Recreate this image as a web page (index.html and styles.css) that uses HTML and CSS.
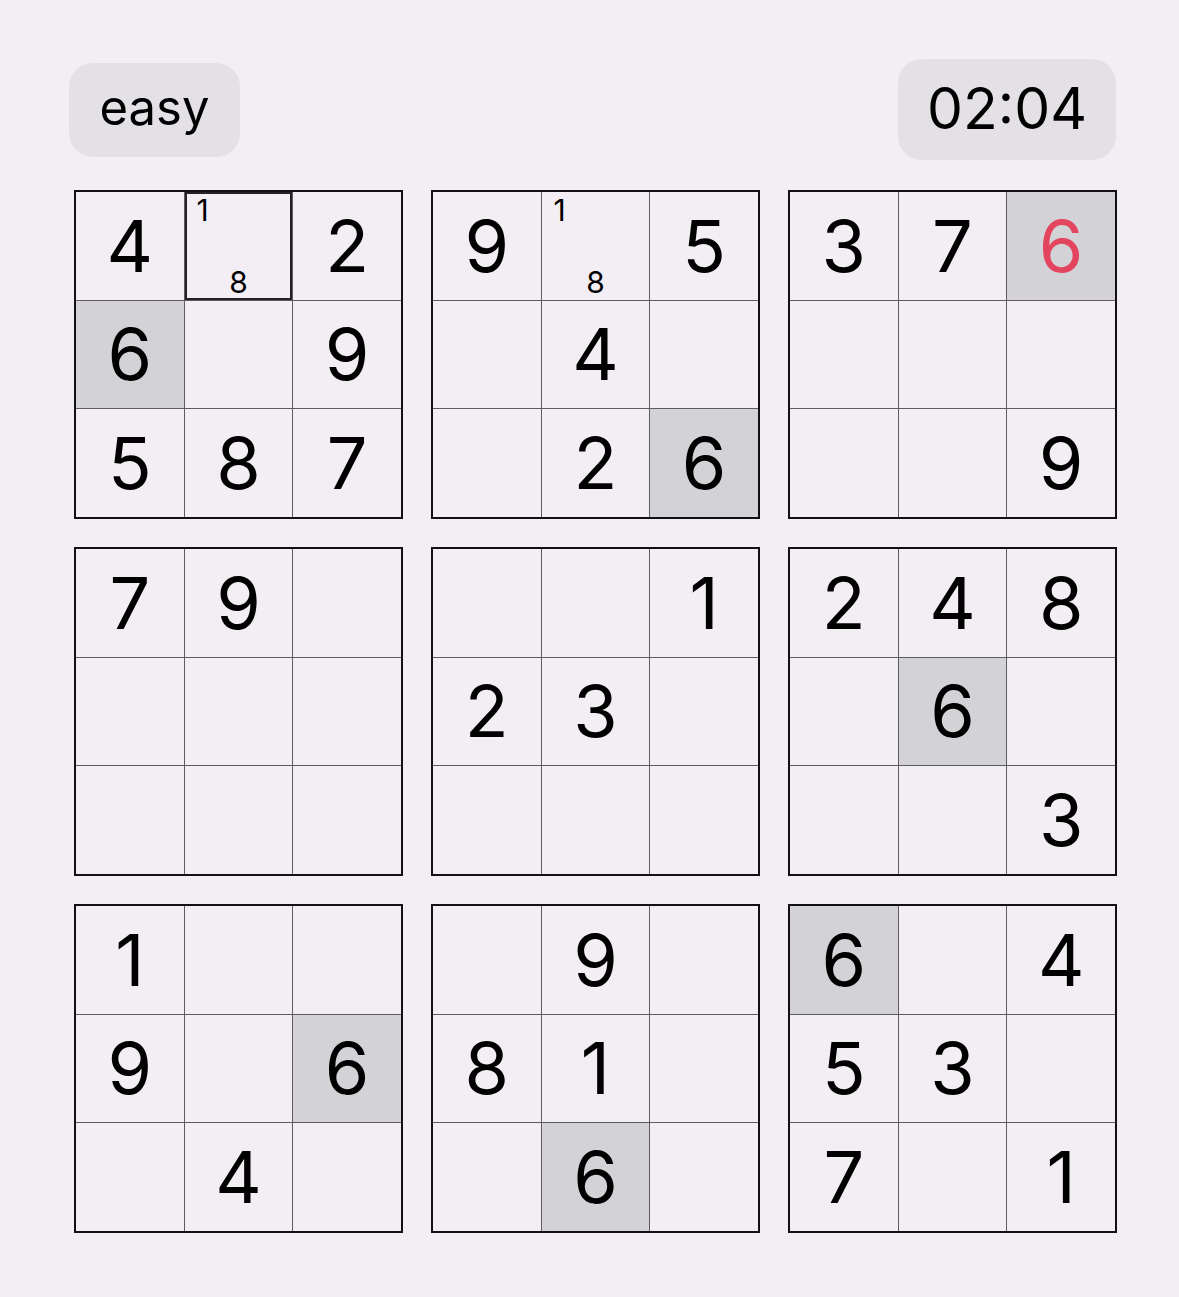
FILE: index.html
```html
<!DOCTYPE html>
<html lang="en">

<head>
    <meta charset="UTF-8">
    <meta name="viewport" content="width=device-width, initial-scale=1.0">
    <title>Sudoku</title>
    <link rel="stylesheet" href="styles.css">
</head>

<body>
    <div class="page">
        <div class="top-bar">
            <div class="pill level">easy</div>
            <div class="pill timer">02:04</div>
        </div>

        <div class="board">
            <!-- box 1 -->
            <div class="box">
                <div class="cell">4</div>
                <div class="cell selected">
                    <div class="notes">
                        <span>1</span><span></span><span></span>
                        <span></span><span></span><span></span>
                        <span></span><span>8</span><span></span>
                    </div>
                </div>
                <div class="cell">2</div>
                <div class="cell same">6</div>
                <div class="cell"></div>
                <div class="cell">9</div>
                <div class="cell">5</div>
                <div class="cell">8</div>
                <div class="cell">7</div>
            </div>

            <!-- box 2 -->
            <div class="box">
                <div class="cell">9</div>
                <div class="cell">
                    <div class="notes">
                        <span>1</span><span></span><span></span>
                        <span></span><span></span><span></span>
                        <span></span><span>8</span><span></span>
                    </div>
                </div>
                <div class="cell">5</div>
                <div class="cell"></div>
                <div class="cell">4</div>
                <div class="cell"></div>
                <div class="cell"></div>
                <div class="cell">2</div>
                <div class="cell same">6</div>
            </div>

            <!-- box 3 -->
            <div class="box">
                <div class="cell">3</div>
                <div class="cell">7</div>
                <div class="cell same error">6</div>
                <div class="cell"></div>
                <div class="cell"></div>
                <div class="cell"></div>
                <div class="cell"></div>
                <div class="cell"></div>
                <div class="cell">9</div>
            </div>

            <!-- box 4 -->
            <div class="box">
                <div class="cell">7</div>
                <div class="cell">9</div>
                <div class="cell"></div>
                <div class="cell"></div>
                <div class="cell"></div>
                <div class="cell"></div>
                <div class="cell"></div>
                <div class="cell"></div>
                <div class="cell"></div>
            </div>

            <!-- box 5 -->
            <div class="box">
                <div class="cell"></div>
                <div class="cell"></div>
                <div class="cell">1</div>
                <div class="cell">2</div>
                <div class="cell">3</div>
                <div class="cell"></div>
                <div class="cell"></div>
                <div class="cell"></div>
                <div class="cell"></div>
            </div>

            <!-- box 6 -->
            <div class="box">
                <div class="cell">2</div>
                <div class="cell">4</div>
                <div class="cell">8</div>
                <div class="cell"></div>
                <div class="cell same">6</div>
                <div class="cell"></div>
                <div class="cell"></div>
                <div class="cell"></div>
                <div class="cell">3</div>
            </div>

            <!-- box 7 -->
            <div class="box">
                <div class="cell">1</div>
                <div class="cell"></div>
                <div class="cell"></div>
                <div class="cell">9</div>
                <div class="cell"></div>
                <div class="cell same">6</div>
                <div class="cell"></div>
                <div class="cell">4</div>
                <div class="cell"></div>
            </div>

            <!-- box 8 -->
            <div class="box">
                <div class="cell"></div>
                <div class="cell">9</div>
                <div class="cell"></div>
                <div class="cell">8</div>
                <div class="cell">1</div>
                <div class="cell"></div>
                <div class="cell"></div>
                <div class="cell same">6</div>
                <div class="cell"></div>
            </div>

            <!-- box 9 -->
            <div class="box">
                <div class="cell same">6</div>
                <div class="cell"></div>
                <div class="cell">4</div>
                <div class="cell">5</div>
                <div class="cell">3</div>
                <div class="cell"></div>
                <div class="cell">7</div>
                <div class="cell"></div>
                <div class="cell">1</div>
            </div>
        </div>
    </div>
</body>

</html>
```

FILE: styles.css
```css
* {
    margin: 0;
    padding: 0;
    box-sizing: border-box;
    font-family: Inter, "Open Sans", sans-serif;
}

body {
    background-color: #f3edf4;
    color: #000;
    min-height: 100vh;
}

.page {
    padding: 59px 63px 40px 69px;
}

.top-bar {
    display: flex;
    justify-content: space-between;
    align-items: center;
    height: 101px;
    margin-bottom: 30px;
}

.pill {
    background-color: #e4e1e6;
    display: flex;
    justify-content: center;
    align-items: center;
    border-radius: 24px;
}

.level {
    width: 171px;
    height: 94px;
    font-size: 49px;
    padding-bottom: 4px;
}

.timer {
    width: 218px;
    height: 101px;
    font-size: 57px;
    padding-bottom: 2px;
}

.board {
    display: grid;
    grid-template-columns: repeat(3, 329px);
    gap: 28px;
    margin-left: 5px;
}

.box {
    width: 329px;
    height: 329px;
    border: 2px solid #111;
    background-color: #5f5b62;
    display: grid;
    grid-template-columns: repeat(3, 1fr);
    grid-template-rows: repeat(3, 1fr);
    gap: 1px;
}

.cell {
    background-color: #f3edf4;
    display: flex;
    justify-content: center;
    align-items: center;
    font-size: 72px;
    line-height: 1;
}

.cell.same {
    background-color: #d3d2d7;
}

.cell.error {
    color: #e2455d;
}

.cell.selected {
    box-shadow: inset 0 0 0 2px #222;
}

.notes {
    width: 100%;
    height: 100%;
    display: grid;
    grid-template-columns: repeat(3, 1fr);
    grid-template-rows: repeat(3, 1fr);
}

.notes span {
    display: flex;
    justify-content: center;
    align-items: center;
    font-size: 30px;
}
```
